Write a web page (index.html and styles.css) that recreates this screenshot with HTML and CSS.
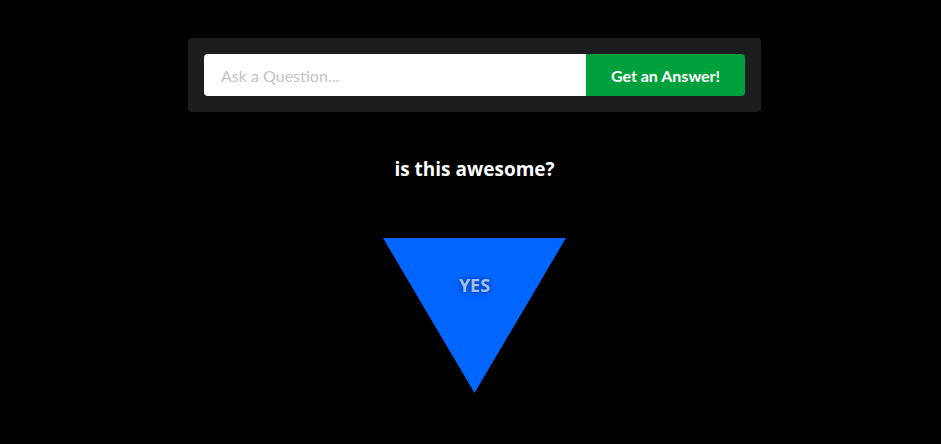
FILE: index.html
```html
<!DOCTYPE html>
<html>
<head>
<meta charset="utf-8">
<link rel="stylesheet" href="styles.css">
</head>
<body>
<div class="page">
  <form class="ask-bar">
    <input class="ask-input" type="text" placeholder="Ask a Question...">
    <button class="ask-btn" type="button">Get an Answer!</button>
  </form>
  <h2 class="question">is this awesome?</h2>
  <div class="answer">
    <span class="answer-text">YES</span>
  </div>
</div>
</body>
</html>
```

FILE: styles.css
```css
html, body {
  margin: 0;
  background: #000;
}
body {
  font-family: Lato, "Open Sans", sans-serif;
}
.page {
  padding: 38px 0 0 8px;
  display: flex;
  flex-direction: column;
  align-items: center;
}
.ask-bar {
  margin: 0;
  width: 573px;
  box-sizing: border-box;
  padding: 16px;
  background: #1c1d1f;
  border-radius: 4px;
  display: flex;
}
.ask-input {
  flex: 1;
  height: 42px;
  box-sizing: border-box;
  border: none;
  outline: none;
  border-radius: 4px 0 0 4px;
  padding: 0 17px;
  font-family: Lato, sans-serif;
  font-size: 16px;
  color: #333;
  background: #fff;
}
.ask-input::placeholder {
  color: #c4c4c4;
}
.ask-btn {
  width: 159px;
  height: 42px;
  border: none;
  border-radius: 0 4px 4px 0;
  background: #00a03c;
  color: #fff;
  font-family: Lato, sans-serif;
  font-weight: 700;
  font-size: 16px;
  padding: 0;
}
.question {
  margin: 44px 0 0;
  color: #fff;
  font-family: "Open Sans", sans-serif;
  font-size: 19px;
  font-weight: 700;
  line-height: 26px;
}
.answer {
  margin-top: 56px;
  width: 183px;
  height: 155px;
  background: #0066ff;
  clip-path: polygon(0 0, 100% 0, 50% 100%);
  display: flex;
  justify-content: center;
}
.answer-text {
  margin-top: 35px;
  height: 24px;
  font-family: "Open Sans", sans-serif;
  font-size: 18px;
  font-weight: 700;
  color: rgba(210, 225, 250, 0.8);
  text-shadow: 0 0 6px #0038a0, 0 0 3px #0048b0;
}
```
